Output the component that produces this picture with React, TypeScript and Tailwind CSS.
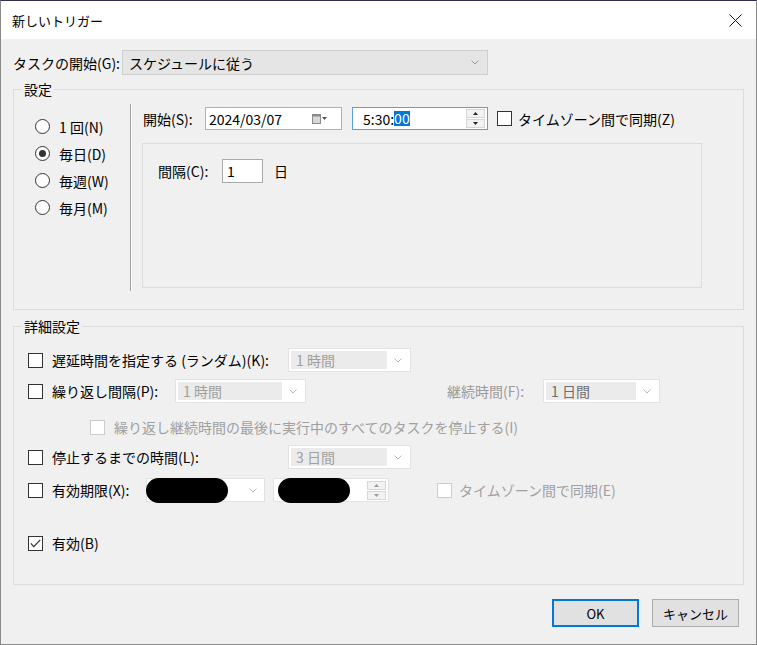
import React from "react";

function Checkbox({ checked = false, disabled = false }: { checked?: boolean; disabled?: boolean }) {
  return (
    <span
      className={
        "w-[15px] h-[15px] shrink-0 bg-white border flex items-center justify-center " +
        (disabled ? "border-[#cccccc]" : "border-[#333333]")
      }
    >
      {checked && (
        <svg width="11" height="9" viewBox="0 0 11 9">
          <polyline points="0.8,4.4 3.8,7.6 10.2,0.9" fill="none" stroke="#333" strokeWidth="1.3" />
        </svg>
      )}
    </span>
  );
}

function Radio({ checked = false }: { checked?: boolean }) {
  return (
    <span className="w-[15px] h-[15px] shrink-0 rounded-full bg-white border border-[#333333] flex items-center justify-center">
      {checked && <span className="w-[7px] h-[7px] rounded-full bg-[#333333]" />}
    </span>
  );
}

function Chevron({ color = "#a8a8a8" }: { color?: string }) {
  return (
    <svg width="8" height="5" viewBox="0 0 8 5">
      <polyline points="0.5,0.5 4,4 7.5,0.5" fill="none" stroke={color} strokeWidth="1" />
    </svg>
  );
}

function SpinButtons({ dark = true }: { dark?: boolean }) {
  const c = dark ? "#222" : "#9a9a9a";
  return (
    <div className="flex flex-col gap-[1px] mr-[2px]">
      <span className="w-[19px] h-[9px] bg-[#f2f2f2] border border-[#d6d6d6] flex items-center justify-center">
        <svg width="5" height="3" viewBox="0 0 5 3">
          <polygon points="0,3 2.5,0 5,3" fill={c} />
        </svg>
      </span>
      <span className="w-[19px] h-[9px] bg-[#f2f2f2] border border-[#d6d6d6] flex items-center justify-center">
        <svg width="5" height="3" viewBox="0 0 5 3">
          <polygon points="0,0 2.5,3 5,0" fill={c} />
        </svg>
      </span>
    </div>
  );
}

function DisabledCombo({ className, text, textClass }: { className: string; text: string; textClass: string }) {
  return (
    <div className={"h-[24px] bg-white border border-[#e2e2e2] flex items-stretch p-[2px] shrink-0 " + className}>
      <div className={"flex-1 bg-[#ebebeb] flex items-center pl-[5px] text-[14px] " + textClass}>{text}</div>
      <div className="w-[21px] flex items-center justify-center">
        <Chevron color="#b8b8b8" />
      </div>
    </div>
  );
}

export default function App() {
  return (
    <div className="w-[757px] h-[645px] bg-[#f0f0f0] border border-[#8a8a8a] border-t-[#2f2f52] flex flex-col font-['Noto_Sans_CJK_JP',sans-serif] text-black text-[14px] overflow-hidden">
      {/* Title bar */}
      <div className="h-[38px] bg-white flex items-center justify-between pl-[11px] pr-[14px] shrink-0">
        <span className="text-[13px] leading-none">新しいトリガー</span>
        <svg width="13" height="13" viewBox="0 0 13 13">
          <line x1="0.5" y1="0.5" x2="12.5" y2="12.5" stroke="#111" strokeWidth="1" />
          <line x1="12.5" y1="0.5" x2="0.5" y2="12.5" stroke="#111" strokeWidth="1" />
        </svg>
      </div>

      <div className="px-[12px] flex flex-col">
        {/* Task start row */}
        <div className="mt-[11px] flex items-center h-[25px]">
          <span className="w-[109px] leading-none">タスクの開始(G):</span>
          <div className="w-[366px] h-[25px] bg-[#e5e5e5] border border-[#cfcfcf] flex items-center justify-between pl-[6px] pr-[8px]">
            <span className="leading-none">スケジュールに従う</span>
            <Chevron color="#9a9a9a" />
          </div>
        </div>

        {/* 設定 group */}
        <div className="relative mt-[14px] h-[221px] border border-[#dcdcdc] flex">
          <span className="absolute left-[8px] -top-[11px] px-[2px] leading-[20px] bg-[#f0f0f0]">設定</span>

          <div className="w-[116px] pl-[21px] pt-[23px] flex flex-col">
            {[
              ["1 回(N)", false],
              ["毎日(D)", true],
              ["毎週(W)", false],
              ["毎月(M)", false],
            ].map(([label, checked]) => (
              <div key={label as string} className="h-[27px] flex items-center gap-[9px]">
                <Radio checked={checked as boolean} />
                <span className="leading-none">{label as string}</span>
              </div>
            ))}
          </div>

          <div className="mt-[14px] h-[187px] w-[2px] border-l border-[#a0a0a0] border-r border-r-white" />

          <div className="pl-[10px] pt-[17px] flex flex-col">
            <div className="h-[23px] flex items-center">
              <span className="w-[63px] leading-none pl-[1px]">開始(S):</span>
              <div className="w-[137px] h-[23px] bg-white border border-[#b0b0b0] flex items-center justify-between pl-[3px] pr-[14px]">
                <span className="leading-none">2024/03/07</span>
                <span className="flex items-center gap-[1px]">
                  <svg width="9" height="10" viewBox="0 0 9 10">
                    <rect x="0.5" y="0.5" width="8" height="9" fill="#d8d8d8" stroke="#8a8a8a" />
                    <rect x="0.5" y="0.5" width="8" height="2" fill="#8a8a8a" />
                  </svg>
                  <svg width="5" height="3" viewBox="0 0 5 3">
                    <polygon points="0,0 2.5,3 5,0" fill="#555" />
                  </svg>
                </span>
              </div>
              <div className="ml-[10px] w-[136px] h-[23px] bg-white border border-[#5b9ee0] flex items-center justify-between pl-[10px]">
                <span className="leading-none flex items-center">
                  5:30:<span className="bg-[#0078d7] text-white leading-[15px]">00</span>
                </span>
                <SpinButtons />
              </div>
              <span className="ml-[9px]">
                <Checkbox />
              </span>
              <span className="ml-[6px] leading-none">タイムゾーン間で同期(Z)</span>
            </div>

            <div className="mt-[13px] w-[560px] h-[145px] border border-[#dcdcdc] pl-[15px] pt-[15px]">
              <div className="h-[24px] flex items-center">
                <span className="w-[64px] leading-none">間隔(C):</span>
                <div className="w-[41px] h-[24px] bg-white border border-[#a9a9a9] flex items-center pl-[4px]">
                  <span className="leading-none">1</span>
                </div>
                <span className="ml-[11px] leading-none">日</span>
              </div>
            </div>
          </div>
        </div>

        {/* 詳細設定 group */}
        <div className="relative mt-[16px] h-[259px] border border-[#dcdcdc] pl-[14px] flex flex-col">
          <span className="absolute left-[8px] -top-[11px] px-[2px] leading-[20px] bg-[#f0f0f0]">詳細設定</span>

          <div className="mt-[21px] h-[24px] flex items-center">
            <Checkbox />
            <span className="ml-[9px] w-[236px] leading-none">遅延時間を指定する (ランダム)(K):</span>
            <DisabledCombo className="w-[123px]" text="1 時間" textClass="text-[#a0a0a0]" />
          </div>

          <div className="mt-[7px] h-[24px] flex items-center">
            <Checkbox />
            <span className="ml-[9px] w-[123px] leading-none">繰り返し間隔(P):</span>
            <DisabledCombo className="w-[131px]" text="1 時間" textClass="text-[#a0a0a0]" />
            <span className="ml-[141px] w-[96px] leading-none text-[#9a9a9a]">継続時間(F):</span>
            <DisabledCombo className="w-[117px]" text="1 日間" textClass="text-[#6e6e6e]" />
          </div>

          <div className="mt-[14px] h-[20px] flex items-center">
            <span className="ml-[62px]">
              <Checkbox disabled />
            </span>
            <span className="ml-[9px] leading-none text-[#a0a0a0]">
              繰り返し継続時間の最後に実行中のすべてのタスクを停止する(I)
            </span>
          </div>

          <div className="mt-[8px] h-[24px] flex items-center">
            <Checkbox />
            <span className="ml-[9px] w-[236px] leading-none">停止するまでの時間(L):</span>
            <DisabledCombo className="w-[123px]" text="3 日間" textClass="text-[#a0a0a0]" />
          </div>

          <div className="mt-[9px] h-[24px] flex items-center">
            <Checkbox />
            <span className="ml-[9px] w-[94px] leading-none">有効期限(X):</span>
            <div className="w-[119px] h-[24px] bg-white border border-[#e2e2e2] flex items-center justify-between pr-[7px]">
              <span className="w-[82px] h-[25px] -ml-[1px] rounded-full bg-black" />
              <Chevron color="#b8b8b8" />
            </div>
            <div className="ml-[8px] w-[116px] h-[24px] bg-white border border-[#e2e2e2] flex items-center justify-between pl-[4px]">
              <span className="w-[72px] h-[25px] rounded-full bg-black" />
              <SpinButtons dark={false} />
            </div>
            <span className="ml-[48px]">
              <Checkbox disabled />
            </span>
            <span className="ml-[7px] leading-none text-[#a0a0a0]">タイムゾーン間で同期(E)</span>
          </div>

          <div className="mt-[31px] h-[20px] flex items-center">
            <Checkbox checked />
            <span className="ml-[9px] leading-none">有効(B)</span>
          </div>
        </div>

        {/* Buttons */}
        <div className="mt-[14px] flex justify-end pr-[5px] gap-[13px]">
          <button className="w-[87px] h-[28px] bg-[#e1e1e1] border-2 border-[#0078d7] text-[13px] leading-none">OK</button>
          <button className="w-[87px] h-[28px] bg-[#e1e1e1] border border-[#adadad] text-[13px] leading-none">キャンセル</button>
        </div>
      </div>
    </div>
  );
}
